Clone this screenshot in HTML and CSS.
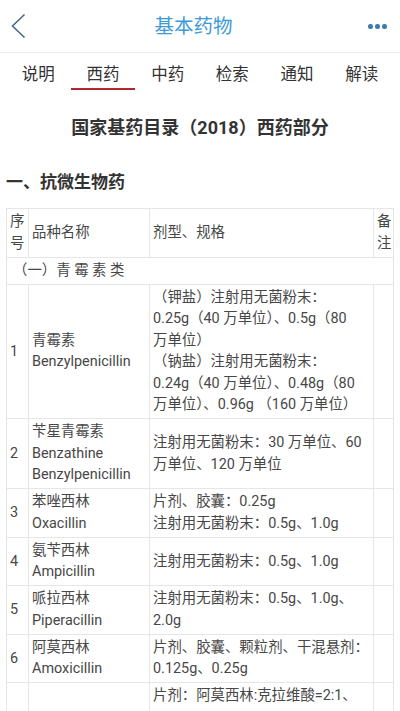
FILE: index.html
```html
<!DOCTYPE html>
<html lang="zh-CN">
<head>
<meta charset="utf-8">
<meta name="viewport" content="width=device-width, initial-scale=1">
<title>基本药物</title>
<link rel="stylesheet" href="styles.css">
</head>
<body>
<header class="topbar">
  <span class="back">
    <svg width="30" height="52" viewBox="0 0 30 52"><polyline points="24.5,14.5 12.5,26 24.5,37.5" fill="none" stroke="#4b6a88" stroke-width="1.6"/></svg>
  </span>
  <h1 class="topbar-title">基本药物</h1>
  <span class="more"><i></i><i></i><i></i></span>
</header>
<nav class="tabs">
  <span class="tab">说明</span>
  <span class="tab active">西药</span>
  <span class="tab">中药</span>
  <span class="tab">检索</span>
  <span class="tab">通知</span>
  <span class="tab">解读</span>
</nav>
<main class="content">
  <h2 class="doc-title">国家基药目录（2018）西药部分</h2>
  <h3 class="section">一、抗微生物药</h3>
  <table class="drugs">
    <colgroup>
      <col class="c-no"><col class="c-name"><col class="c-spec"><col class="c-note">
    </colgroup>
    <tr>
      <td>序号</td><td>品种名称</td><td>剂型、规格</td><td>备注</td>
    </tr>
    <tr>
      <td colspan="4" class="cat">（一）青 霉 素 类</td>
    </tr>
    <tr>
      <td>1</td>
      <td>青霉素<br>Benzylpenicillin</td>
      <td>（钾盐）注射用无菌粉末：<br>0.25g（40 万单位）、0.5g（80<br>万单位）<br>（钠盐）注射用无菌粉末：<br>0.24g（40 万单位）、0.48g（80 万单位）、0.96g （160 万单位）</td>
      <td></td>
    </tr>
    <tr>
      <td>2</td>
      <td>苄星青霉素<br>Benzathine Benzylpenicillin</td>
      <td>注射用无菌粉末：30 万单位、60 万单位、120 万单位</td>
      <td></td>
    </tr>
    <tr>
      <td>3</td>
      <td>苯唑西林<br>Oxacillin</td>
      <td>片剂、胶囊：0.25g<br>注射用无菌粉末：0.5g、1.0g</td>
      <td></td>
    </tr>
    <tr>
      <td>4</td>
      <td>氨苄西林<br>Ampicillin</td>
      <td>注射用无菌粉末：0.5g、1.0g</td>
      <td></td>
    </tr>
    <tr>
      <td>5</td>
      <td>哌拉西林<br>Piperacillin</td>
      <td>注射用无菌粉末：0.5g、1.0g、2.0g</td>
      <td></td>
    </tr>
    <tr>
      <td>6</td>
      <td>阿莫西林<br>Amoxicillin</td>
      <td>片剂、胶囊、颗粒剂、干混悬剂：0.125g、0.25g</td>
      <td></td>
    </tr>
    <tr>
      <td>7</td>
      <td>阿莫西林克拉维酸钾<br>Amoxicillin and Clavulanate Potassium</td>
      <td>片剂：阿莫西林:克拉维酸=2:1、4:1、7:1<br>颗粒剂：阿莫西林:克拉维酸=4:1、7:1<br>干混悬剂：阿莫西林:克拉维酸=4:1、7:1<br>注射用无菌粉末：阿莫西林:克拉维酸=5:1、10:1<br>分散片：阿莫西林:克拉维酸=4:1、7:1</td>
      <td></td>
    </tr>
  </table>
</main>
</body>
</html>
```

FILE: styles.css
```css
* { box-sizing: border-box; }
html, body {
  margin: 0;
  padding: 0;
  background: #ffffff;
}
body {
  font-family: Roboto, "Noto Sans CJK SC", sans-serif;
  color: #444444;
}
.topbar {
  height: 53px;
  border-bottom: 1px solid #ececec;
  display: flex;
  align-items: center;
  justify-content: space-between;
  padding: 0 13px 0 0;
}
.back {
  width: 30px;
  height: 52px;
  display: block;
}
.back svg { display: block; }
.topbar-title {
  margin: 0;
  font-size: 19.5px;
  font-weight: normal;
  color: #3d9ad6;
  line-height: 52px;
  padding-top: 2px;
}
.more {
  display: flex;
  gap: 2.5px;
  width: 30px;
  justify-content: flex-end;
  padding-top: 1px;
}
.more i {
  display: block;
  width: 4.5px;
  height: 4.5px;
  border-radius: 50%;
  background: #3b7ca8;
}
.tabs {
  display: flex;
  padding: 0 6px;
}
.tab {
  flex: 1;
  text-align: center;
  font-size: 16.5px;
  line-height: 24px;
  color: #333333;
  padding: 10px 0 1px;
  border-bottom: 2.5px solid transparent;
}
.tab.active {
  border-bottom-color: #b0282c;
}
.content {
  padding: 0 6px;
}
.doc-title {
  margin: 26px 0 0;
  text-align: center;
  font-size: 18px;
  line-height: 24px;
  font-weight: bold;
  color: #333333;
}
.section {
  margin: 30px 0 0;
  font-size: 17px;
  line-height: 24px;
  font-weight: bold;
  color: #333333;
}
.drugs {
  margin-top: 14px;
  width: 387px;
  table-layout: fixed;
  border-collapse: collapse;
  font-size: 14.4px;
  line-height: 21.5px;
  color: #474747;
}
.c-no { width: 22px; }
.c-name { width: 121px; }
.c-spec { width: 224px; }
.c-note { width: 20px; }
.drugs td {
  border: 1px solid #e6e6e6;
  padding: 2.25px 3px;
  vertical-align: middle;
  word-wrap: break-word;
  overflow: visible;
}
.drugs td.cat {
  padding-left: 6px;
}
```
